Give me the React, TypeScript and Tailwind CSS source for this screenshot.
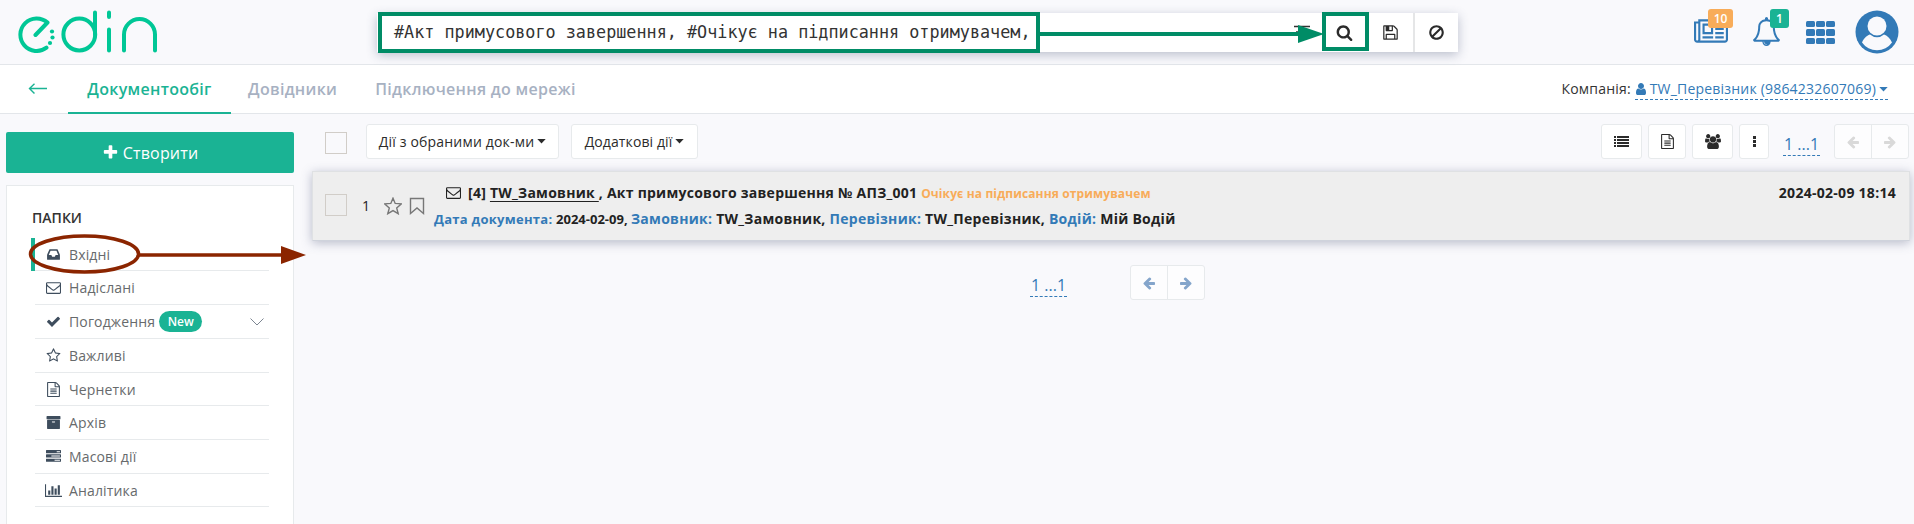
import React from "react";

const P = {
  envelope:
    "M1664 1504v-768q-32 36-69 66-268 206-426 338-51 43-83 67t-86.5 48.5-102.5 24.5h-2q-48 0-102.5-24.5t-86.5-48.5-83-67q-158-132-426-338-37-30-69-66v768q0 13 9.5 22.5t22.5 9.5h1472q13 0 22.5-9.5t9.5-22.5zm0-1051v-24.5l-.5-13-3-12.5-5.5-9-9-7.5-14-2.5h-1472q-13 0-22.5 9.5t-9.5 22.5q0 168 147 284 193 152 401 317 6 5 35 29.5t46 37.5 44.5 31.5 50.5 27.5 43 9h2q20 0 43-9t50.5-27.5 44.5-31.5 46-37.5 35-29.5q208-165 401-317 54-43 100.5-115.5t46.5-131.5zm128-37v1088q0 66-47 113t-113 47h-1472q-66 0-113-47t-47-113v-1088q0-66 47-113t113-47h1472q66 0 113 47t47 113z",
  search:
    "M1216 832q0-185-131.5-316.5t-316.5-131.5-316.5 131.5-131.5 316.5 131.5 316.5 316.5 131.5 316.5-131.5 131.5-316.5zm512 832q0 52-38 90t-90 38q-54 0-90-38l-343-342q-179 124-399 124-143 0-273.5-55.5t-225-150-150-225-55.5-273.5 55.5-273.5 150-225 225-150 273.5-55.5 273.5 55.5 225 150 150 225 55.5 273.5q0 220-124 399l343 343q37 37 37 90z",
  floppy:
    "M512 1536h768v-384h-768v384zm896 0h128v-896q0-14-10-38.5t-20-34.5l-281-281q-10-10-34-20t-39-10v416q0 40-28 68t-68 28h-576q-40 0-68-28t-28-68v-416h-128v1280h128v-416q0-40 28-68t68-28h832q40 0 68 28t28 68v416zm-384-928v-320q0-13-9.5-22.5t-22.5-9.5h-192q-13 0-22.5 9.5t-9.5 22.5v320q0 13 9.5 22.5t22.5 9.5h192q13 0 22.5-9.5t9.5-22.5zm640 32v928q0 40-28 68t-68 28h-1344q-40 0-68-28t-28-68v-1344q0-40 28-68t68-28h928q40 0 88 20t76 48l280 280q28 28 48 76t20 88z",
  ban: "M1440 893q0-161-87-295l-754 753q137 89 297 89 111 0 211.5-43.5t173.5-116.5 116-174.5 43-212.5zm-999 299l755-754q-135-91-300-91-148 0-273 73t-198 199-73 274q0 162 89 299zm1223-299q0 157-61 300t-163.5 246-245 164-298.5 61-298.5-61-245-164-163.5-246-61-300 61-299.5 163.5-245.5 245-164 298.5-61 298.5 61 245 164 163.5 245.5 61 299.5z",
  check:
    "M1671 566q0 40-28 68l-724 724-136 136q-28 28-68 28t-68-28l-136-136-362-362q-28-28-28-68t28-68l136-136q28-28 68-28t68 28l294 295 656-657q28-28 68-28t68 28l136 136q28 28 28 68z",
  star: "M1201 1004l306-297-422-62-189-382-189 382-422 62 306 297-73 421 378-199 377 199zm527-357q0 22-26 48l-363 354 86 500q1 7 1 20 0 50-41 50-19 0-40-12l-449-236-449 236q-22 12-40 12-21 0-31.5-14.5t-10.5-35.5q0-6 2-20l86-500-364-354q-25-27-25-48 0-37 56-46l502-73 225-455q19-41 49-41t49 41l225 455 502 73q56 9 56 46z",
  file: "M1596 380q28 28 48 76t20 88v1152q0 40-28 68t-68 28h-1344q-40 0-68-28t-28-68v-1600q0-40 28-68t68-28h896q40 0 88 20t76 48zm-444-244v376h376q-10-29-22-41l-313-313q-12-12-41-22zm384 1528v-1024h-416q-40 0-68-28t-28-68v-416h-768v1536h1280zm-1024-864q0-14 9-23t23-9h704q14 0 23 9t9 23v64q0 14-9 23t-23 9h-704q-14 0-23-9t-9-23v-64zm736 224q14 0 23 9t9 23v64q0 14-9 23t-23 9h-704q-14 0-23-9t-9-23v-64q0-14 9-23t23-9h704zm0 256q14 0 23 9t9 23v64q0 14-9 23t-23 9h-704q-14 0-23-9t-9-23v-64q0-14 9-23t23-9h704z",
  archive:
    "M1088 832q0-26-19-45t-45-19h-256q-26 0-45 19t-19 45 19 45 45 19h256q26 0 45-19t19-45zm576-192v960q0 26-19 45t-45 19h-1408q-26 0-45-19t-19-45v-960q0-26 19-45t45-19h1408q26 0 45 19t19 45zm64-448v256q0 26-19 45t-45 19h-1536q-26 0-45-19t-19-45v-256q0-26 19-45t45-19h1536q26 0 45 19t19 45z",
  inbox:
    "M1151 960h316q-1-3-2.5-8t-2.5-8l-212-496h-708l-212 496q-1 2-2.5 8t-2.5 8h316l95 192h320zm513 30v482q0 26-19 45t-45 19h-1408q-26 0-45-19t-19-45v-482q0-62 25-123l238-552q10-25 36.5-42t52.5-17h832q26 0 52.5 17t36.5 42l238 552q25 61 25 123z",
  tasks:
    "M1024 1408h640v-128h-640v128zm-384-512h1024v-128h-1024v128zm640-512h384v-128h-384v128zm512 832v256q0 26-19 45t-45 19h-1664q-26 0-45-19t-19-45v-256q0-26 19-45t45-19h1664q26 0 45 19t19 45zm0-512v256q0 26-19 45t-45 19h-1664q-26 0-45-19t-19-45v-256q0-26 19-45t45-19h1664q26 0 45 19t19 45zm0-512v256q0 26-19 45t-45 19h-1664q-26 0-45-19t-19-45v-256q0-26 19-45t45-19h1664q26 0 45 19t19 45z",
  chart:
    "M640 896v512h-256v-512h256zm384-512v1024h-256v-1024h256zm1024 1152v128h-2048v-1536h128v1408h1920zm-640-896v768h-256v-768h256zm384-384v1152h-256v-1152h256z",
  news: "M1024 512h-384v384h384v-384zm128 640v128h-640v-128h640zm0-768v640h-640v-640h640zm640 768v128h-512v-128h512zm0-256v128h-512v-128h512zm0-256v128h-512v-128h512zm0-256v128h-512v-128h512zm-1536 960v-960h-128v960q0 26 19 45t45 19 45-19 19-45zm1664 0v-1088h-1536v1088q0 33-11 64h1483q26 0 45-19t19-45zm128-1216v1216q0 80-56 136t-136 56h-1664q-80 0-136-56t-56-136v-1088h256v-128h1792z",
  bell: "M912 1696q0-16-16-16-59 0-101.5-42.5t-42.5-101.5q0-16-16-16t-16 16q0 73 51.5 124.5t124.5 51.5q16 0 16-16zm-666-288h1300q-266-300-266-832 0-51-24-105t-69-103-121.5-80.5-169.5-31.5-169.5 31.5-121.5 80.5-69 103-24 105q0 532-266 832zm1482 0q0 52-38 90t-90 38h-448q0 106-75 181t-181 75-181-75-75-181h-448q-52 0-90-38t-38-90q50-42 91-88t85-119.5 74.5-158.5 50-206 19.5-260q0-152 117-282.5t307-158.5q-8-19-8-39 0-40 28-68t68-28 68 28 28 68q0 20-8 39 190 28 307 158.5t117 282.5q0 139 19.5 260t50 206 74.5 158.5 85 119.5 91 88z",
  plus: "M1600 736v192q0 40-28 68t-68 28h-416v416q0 40-28 68t-68 28h-192q-40 0-68-28t-28-68v-416h-416q-40 0-68-28t-28-68v-192q0-40 28-68t68-28h416v-416q0-40 28-68t68-28h192q40 0 68 28t28 68v416h416q40 0 68 28t28 68z",
  user: "M1536 1399q0 109-62.5 187t-150.5 78h-854q-88 0-150.5-78t-62.5-187q0-85 8.5-160.5t31.5-152 58.5-131 94-89 134.5-34.5q131 128 313 128t313-128q76 0 134.5 34.5t94 89 58.5 131 31.5 152 8.5 160.5zm-256-887q0 159-112.5 271.5t-271.5 112.5-271.5-112.5-112.5-271.5 112.5-271.5 271.5-112.5 271.5 112.5 112.5 271.5z",
  users:
    "M593 896q-162 5-265 128h-134q-82 0-138-40.5t-56-118.5q0-353 124-353 6 0 43.5 21t97.5 42.5 119 21.5q67 0 133-23-5 37-5 66 0 143 81 256zm1071 637q0 120-73 189.5t-194 69.5h-874q-121 0-194-69.5t-73-189.5q0-53 3.5-103.5t14-109 26.5-108.5 43-97.5 62-81 85.5-53.5 111.5-20q10 0 43 21.5t73 48 107 48 135 21.5 135-21.5 107-48 73-48 43-21.5q61 0 111.5 20t85.5 53.5 62 81 43 97.5 26.5 108.5 14 109 3.5 103.5zm-1024-1277q0 106-75 181t-181 75-181-75-75-181 75-181 181-75 181 75 75 181zm704 384q0 159-112.5 271.5t-271.5 112.5-271.5-112.5-112.5-271.5 112.5-271.5 271.5-112.5 271.5 112.5 112.5 271.5zm576 225q0 78-56 118.5t-138 40.5h-134q-103-123-265-128 81-113 81-256 0-29-5-66 66 23 133 23 59 0 119-21.5t97.5-42.5 43.5-21q124 0 124 353zm-128-609q0 106-75 181t-181 75-181-75-75-181 75-181 181-75 181 75 75 181z",
  arrow:
    "M1664 896v128q0 53-32.5 90.5t-84.5 37.5h-704l293 294q38 36 38 90t-38 90l-75 76q-37 37-90 37-52 0-91-37l-651-652q-37-37-37-90 0-52 37-91l651-650q38-38 91-38 52 0 90 38l75 74q38 38 38 91t-38 91l-293 293h704q52 0 84.5 37.5t32.5 90.5z",
};

const WIDTHS: Partial<Record<keyof typeof P, number>> = { chart: 2048, news: 2048, users: 1920 };

function Icon({ name, className = "" }: { name: keyof typeof P; className?: string }) {
  return (
    <svg viewBox={`0 0 ${WIDTHS[name] ?? 1792} 1792`} className={`shrink-0 fill-current ${className}`}>
      <path d={P[name]} />
    </svg>
  );
}

function Caret({ className = "" }: { className?: string }) {
  return (
    <svg viewBox="0 0 9 5" className={`h-[5px] w-[9px] shrink-0 fill-current ${className}`}>
      <path d="M.3 0h8.400L4.500 4.500z" />
    </svg>
  );
}

function Logo() {
  return (
    <svg viewBox="0 0 140 44" className="h-[44px] w-[140px]" fill="none" stroke="#00c796" strokeWidth="4" strokeLinecap="round" strokeLinejoin="round">
      <path d="M17.500 26 29.500 13.500A16.300 16.300 0 1 0 28.500 38.700" />
      <circle cx="61.300" cy="25.500" r="15.900" />
      <path d="M77 3.500V25.500M91 3.500V8M91 20.500V41.500M106 41.500V25.500a15.500 15.500 0 0 1 31 0V41.500" />
      <g fill="#00c796" stroke="none">
        <circle cx="34" cy="22.500" r="2.100" />
        <circle cx="34.500" cy="28.500" r="2.100" />
        <circle cx="32" cy="34" r="2.100" />
      </g>
    </svg>
  );
}

function Header() {
  return (
    <header className="flex h-[65px] shrink-0 border-b border-[#e3e6ea]">
      <div className="w-[377px] shrink-0 pt-[9px] pl-[18px]">
        <Logo />
      </div>
      <div className="relative mt-[13px] flex h-[39px] w-[1081px] shrink-0 bg-white shadow-[0_3px_10px_rgba(60,70,110,0.32)]">
        <div className="flex w-[944px] items-center pl-[17px] text-[16.800px] whitespace-pre text-[#333]" style={{ fontFamily: '"DejaVu Sans Mono", monospace' }}>
          #Акт примусового завершення, #Очікує на підписання отримувачем,
        </div>
        <div className="w-[46px]" />
        <div className="flex w-[48px] items-center justify-center border-r-2 border-[#e5e6e7] text-[#2b2b2b]">
          <Icon name="floppy" className="size-[17px]" />
        </div>
        <div className="flex w-[43px] items-center justify-center text-[#2b2b2b]">
          <Icon name="ban" className="mr-px size-[17px]" />
        </div>
        <svg className="absolute -top-[1px] left-0 h-[41px] w-[1081px]" viewBox="0 0 1081 41" fill="none">
          <path d="M917 14.500h16M919 20h12M921 25h8" stroke="#333" strokeWidth="1.500" />
          <rect x="3" y="2" width="658" height="37" stroke="#008c66" strokeWidth="4" />
          <path d="M663 22H924" stroke="#008c66" strokeWidth="4" />
          <path d="M921 13v18l26-9z" fill="#008c66" />
          <rect x="947" y="2" width="43" height="35" stroke="#008c66" strokeWidth="4" />
        </svg>
        <div className="absolute top-[11px] left-[959px] text-[#2b2b2b]">
          <Icon name="search" className="size-[17px]" />
        </div>
      </div>
      <div className="ml-auto flex text-[#337ab7]">
        <div className="relative mt-[17px] mr-[24px] h-[30px] w-[34px]">
          <Icon name="news" className="h-[30px] w-[34px]" />
          <span className="absolute -top-[8px] left-[14px] flex h-[19px] w-[25px] items-center justify-center rounded-[3px] bg-[#f8ac59] text-[12px] font-semibold text-white">10</span>
        </div>
        <div className="relative mt-[17px] mr-[26px] h-[30px] w-[28px]">
          <Icon name="bell" className="size-[29px]" />
          <span className="absolute -top-[8px] left-[18px] flex h-[19px] w-[19px] items-center justify-center rounded-[3px] bg-[#1ab394] text-[12px] font-semibold text-white">1</span>
        </div>
        <div className="mt-[21px] mr-[20px] grid h-[23px] w-[29px] grid-cols-3 grid-rows-3 gap-x-[1.500px] gap-y-[2px]">
          {Array.from({ length: 9 }, (_, i) => (
            <span key={i} className="rounded-[1.500px] bg-[#337ab7]" />
          ))}
        </div>
        <svg viewBox="0 0 44 44" className="mt-[10px] mr-[15px] size-[44px]">
          <circle cx="22" cy="22" r="21.500" fill="#337ab7" />
          <path d="M7 32.500C9 27.500 13 25 15 24.500a10.500 10.500 0 0 0 14 0C32 25.500 35 28 37 32.500A18.300 18.300 0 0 1 7 32.500z" fill="#f9f9fc" />
          <circle cx="22" cy="16" r="9.500" fill="#f9f9fc" />
        </svg>
      </div>
    </header>
  );
}

function Nav() {
  return (
    <nav className="flex h-[49px] shrink-0 border-b border-[#e3e6ea] bg-white text-[16px] font-semibold tracking-[0.300px] text-[#a7b1c2]">
      <div className="w-[68px] pt-[18px] pl-[28px]">
        <svg viewBox="0 0 20 12" className="h-[12px] w-[20px]" fill="none" stroke="#1ab394" strokeWidth="1.400">
          <path d="M19 5.500H1.500M6.500 .8 1.500 5.500l5 5" />
        </svg>
      </div>
      <div className="-mb-px flex w-[163px] justify-center border-b-2 border-[#1ab394] pt-[12px] text-[#1ab394]">Документообіг</div>
      <div className="pt-[12px] pl-[17px]">Довідники</div>
      <div className="pt-[12px] pl-[38px]">Підключення до мережі</div>
      <div className="mt-[13px] mr-[26px] ml-auto flex h-[22px] text-[14px] font-normal tracking-[0.200px] text-[#333]">
        <span>Компанія:&nbsp;</span>
        <span className="flex h-[22px] items-start border-b border-dashed border-[#337ab7] text-[#337ab7]">
          <Icon name="user" className="mt-[4px] -ml-[1px] size-[14px]" />
          <span className="ml-[2px]">TW_Перевізник (9864232607069)</span>
          <Caret className="mt-[9px] ml-[3px]" />
        </span>
      </div>
    </nav>
  );
}

const FOLDERS: { name: string; icon: keyof typeof P; height: string }[] = [
  { name: "Вхідні", icon: "inbox", height: "h-[33px]" },
  { name: "Надіслані", icon: "envelope", height: "h-[34px]" },
  { name: "Погодження", icon: "check", height: "h-[34px]" },
  { name: "Важливі", icon: "star", height: "h-[34px]" },
  { name: "Чернетки", icon: "file", height: "h-[33px]" },
  { name: "Архів", icon: "archive", height: "h-[34px]" },
  { name: "Масові дії", icon: "tasks", height: "h-[34px]" },
  { name: "Аналітика", icon: "chart", height: "h-[33px]" },
];

function Sidebar() {
  return (
    <aside className="relative ml-[6px] flex w-[288px] shrink-0 flex-col pt-[18px]">
      <button className="flex h-[41px] shrink-0 items-center justify-center gap-[4px] rounded-[2px] bg-[#1ab394] text-[16px] tracking-[0.200px] text-white">
        <Icon name="plus" className="size-[17px]" />
        Створити
      </button>
      <div className="mt-[12px] h-[360px] shrink-0 border border-[#e7eaec] bg-white">
        <h2 className="pt-[22px] pl-[25px] text-[14px] leading-[20px] font-semibold text-[#333]">ПАПКИ</h2>
        <ul className="mt-[10px] mr-[24px] ml-[24px]">
          {FOLDERS.map((f, i) => (
            <li key={f.name} className={`flex ${i === 0 ? "border-l-4 border-[#1ab394]" : "pl-[4px]"}`}>
              <span className={`flex w-full items-center border-b border-[#e7eaec] text-[14px] text-[#676a6c] ${f.height}`}>
                <span className="ml-[9px] flex w-[19px] justify-center text-[#3e4d5d]">
                  <Icon name={f.icon} className={f.icon === "chart" ? "h-[15px] w-[17px]" : "size-[15px]"} />
                </span>
                <span className="ml-[6px] tracking-[0.150px]">{f.name}</span>
                {f.icon === "check" && (
                  <>
                    <span className="ml-[4px] flex h-[21px] w-[43px] items-center justify-center rounded-full bg-[#1ab394] text-[12px] font-semibold text-white">New</span>
                    <svg viewBox="0 0 14 8" className="mr-[5px] ml-auto h-[8px] w-[14px]" fill="none" stroke="#7c8591">
                      <path d="M.5 .5 7 7l6.500-6.500" />
                    </svg>
                  </>
                )}
              </span>
            </li>
          ))}
        </ul>
      </div>
      <svg className="absolute top-[120px] left-[22px] h-[40px] w-[280px]" viewBox="0 0 280 40" fill="none">
        <ellipse cx="56.500" cy="20" rx="54" ry="18" stroke="#8b2500" strokeWidth="3.500" />
        <path d="M110 21H255" stroke="#8b2500" strokeWidth="3.500" />
        <path d="M253 12v18l25-9z" fill="#8b2500" />
      </svg>
    </aside>
  );
}

function Dots() {
  return <span className="flex h-[25px] w-[37px] items-center justify-center border-b border-dashed border-[#337ab7] pt-[2px] text-[16px] text-[#337ab7]">1 ...1</span>;
}

const BTN = "flex h-[35px] items-center justify-center rounded-[3px] border border-[#e7eaec] bg-white text-[#2b2b2b]";

function Pager({ muted = false }: { muted?: boolean }) {
  return (
    <div className={`flex h-[35px] w-[75px] rounded-[3px] border border-[#e7eaec] bg-[#fdfdfe] ${muted ? "text-[#d9d9d9]" : "text-[#84a5cb]"}`}>
      <span className="flex w-[37px] items-center justify-center border-r border-[#e7eaec]">
        <Icon name="arrow" className="size-[14px]" />
      </span>
      <span className="flex flex-1 items-center justify-center">
        <Icon name="arrow" className="size-[14px] -scale-x-100" />
      </span>
    </div>
  );
}

function Toolbar() {
  return (
    <div className="flex h-[57px] shrink-0 pl-[14px]">
      <span className="mt-[18px] size-[22px] border border-[#d1cdc8] bg-[#f9f9fc]" />
      <button className={`${BTN} mt-[10px] ml-[19px] w-[193px] gap-[3px] text-[14px] tracking-[0.180px]`}>
        Дії з обраними док-ми
        <Caret />
      </button>
      <button className={`${BTN} mt-[10px] ml-[12px] w-[127px] gap-[3px] text-[14px] tracking-[0.100px]`}>
        Додаткові дії
        <Caret />
      </button>
      <div className="mt-[10px] mr-[5px] ml-auto flex">
        <button className={`${BTN} w-[41px]`}>
          <svg viewBox="0 0 15 11" className="h-[11px] w-[15px] fill-current">
            <path d="M0 0h2v2H0zM3 0h12v2H3zM0 3h2v2H0zM3 3h12v2H3zM0 6h2v2H0zM3 6h12v2H3zM0 9h2v2H0zM3 9h12v2H3z" />
          </svg>
        </button>
        <button className={`${BTN} ml-[6px] w-[38px]`}>
          <Icon name="file" className="size-[15px]" />
        </button>
        <button className={`${BTN} ml-[6px] w-[41px]`}>
          <Icon name="users" className="h-[15px] w-[16px]" />
        </button>
        <button className={`${BTN} ml-[6px] w-[30px]`}>
          <svg viewBox="0 0 3 11" className="h-[11px] w-[3px] fill-current">
            <path d="M0 0h3v3H0zM0 4h3v3H0zM0 8h3v3H0z" />
          </svg>
        </button>
        <div className="mt-[7px] mr-[14px] ml-[14px]">
          <Dots />
        </div>
        <Pager muted />
      </div>
    </div>
  );
}

function DocumentRow() {
  return (
    <div className="mr-[4px] ml-px flex h-[70px] shrink-0 border border-[#dfe1e3] border-b-[#cfd3dc] bg-[#eee] text-[14px] text-[#222] shadow-[0_2px_10px_rgba(60,70,110,0.35)]">
      <span className="mt-[22px] ml-[12px] size-[22px] border border-[#d1cdc8]" />
      <span className="mt-[24px] ml-[15px] w-[10px] leading-[20px]">1</span>
      <svg viewBox="0 0 18 18" className="mt-[25px] ml-[12px] size-[18px]" fill="none" stroke="#777" strokeWidth="1.400">
        <path d="m9 1.200 2.200 5.200 6 .5-4.500 4 1.500 5.800L9 13.600l-5.200 3.100 1.500-5.800-4.500-4 6-.5z" />
      </svg>
      <svg viewBox="0 0 16 18" className="mt-[25px] ml-[7px] h-[18px] w-[16px]" fill="none" stroke="#777" strokeWidth="1.400">
        <path d="M1.500 1.500h13v15L8 11l-6.500 5.500z" />
      </svg>
      <div className="ml-[9px] flex flex-col font-bold whitespace-pre">
        <div className="mt-[10px] flex h-[21px] items-center pl-[12px]">
          <Icon name="envelope" className="size-[15px]" />
          <span className="ml-[7px] tracking-[0.250px]">
            [4] <u className="underline-offset-[3px]">TW_Замовник </u>, Акт примусового завершення № АПЗ_001 <span className="text-[12px] tracking-[0.120px] text-[#f8ac59]">Очікує на підписання отримувачем</span>
          </span>
        </div>
        <div className="mt-[5px] flex h-[21px] items-baseline tracking-[0.270px]">
          <span className="text-[13px] text-[#337ab7]">Дата документа: </span>
          <span className="text-[13px] tracking-normal">2024-02-09, </span>
          <span className="text-[#337ab7]">Замовник: </span>TW_Замовник, <span className="text-[#337ab7]">Перевізник: </span>TW_Перевізник, <span className="text-[#337ab7]">Водій: </span>Мій Водій
        </div>
      </div>
      <span className="mt-[11px] mr-[13px] ml-auto leading-[20px] font-bold tracking-[0.280px]">2024-02-09 18:14</span>
    </div>
  );
}

export default function App() {
  return (
    <div className="flex h-[524px] w-full flex-col overflow-hidden bg-[#f9f9fc] leading-normal" style={{ fontFamily: '"Open Sans", sans-serif' }}>
      <Header />
      <Nav />
      <div className="flex min-h-0 flex-1">
        <Sidebar />
        <main className="ml-[17px] flex min-w-0 flex-1 flex-col">
          <Toolbar />
          <DocumentRow />
          <div className="mt-[24px] flex pl-[719px]">
            <div className="mt-[7px] mr-[63px]">
              <Dots />
            </div>
            <Pager />
          </div>
        </main>
      </div>
    </div>
  );
}
